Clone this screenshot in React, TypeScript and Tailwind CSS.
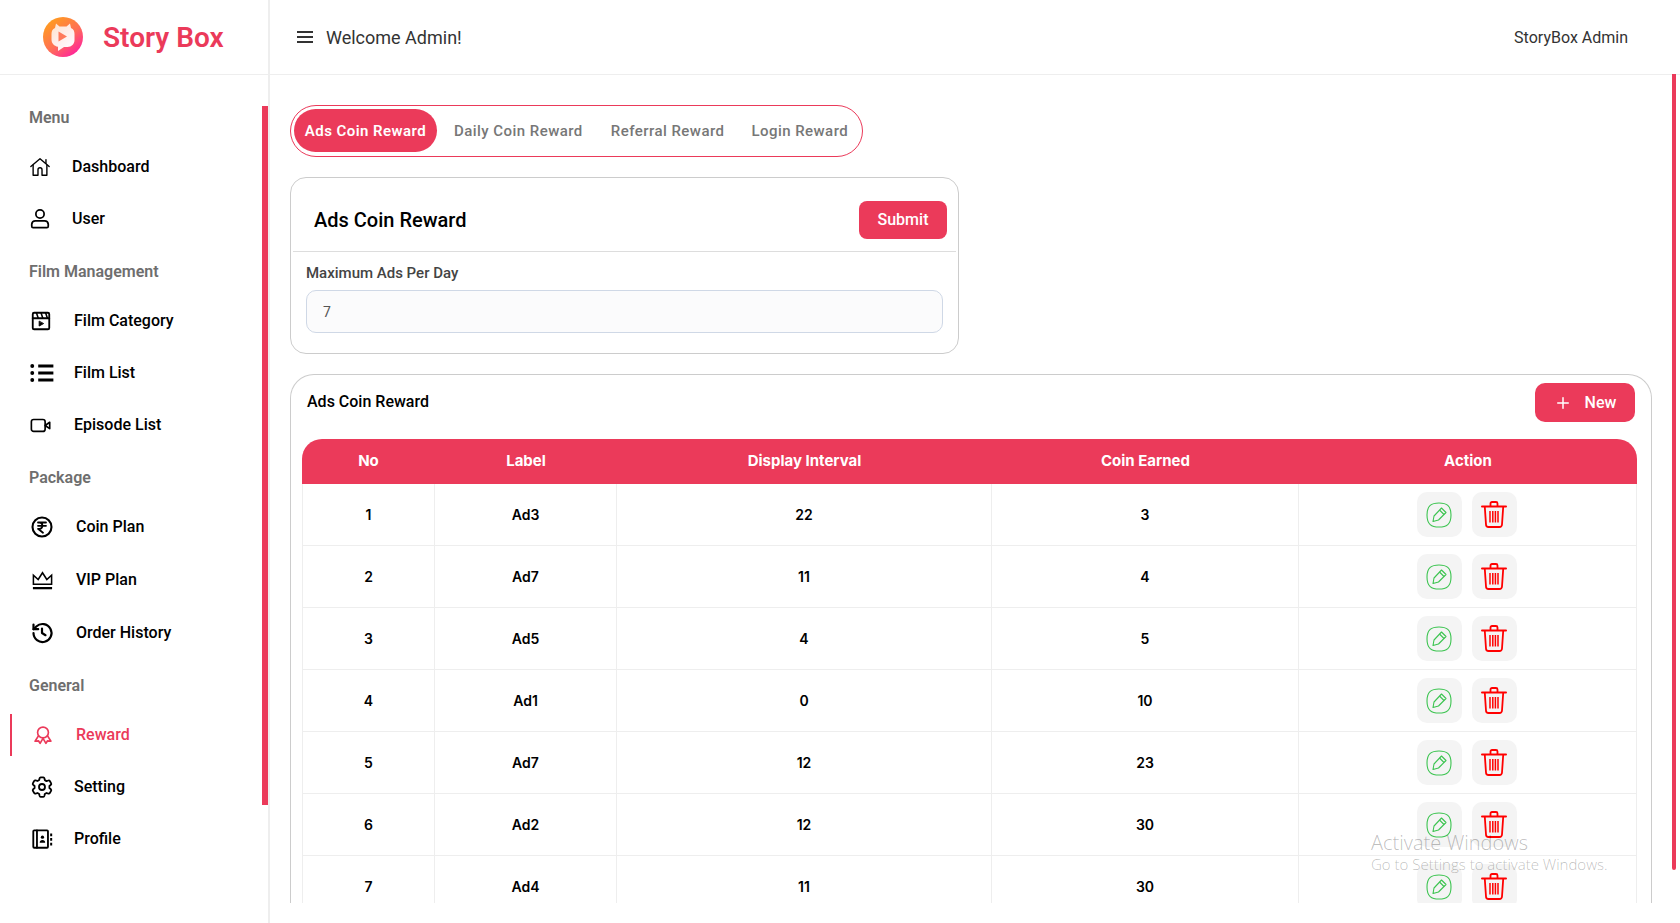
import React from "react";
import { Plus } from "lucide-react";

const S = ({ children, className = "w-5 h-5" }: { children: React.ReactNode; className?: string }) => (
  <svg viewBox="0 0 24 24" fill="none" stroke="currentColor" strokeWidth={2} strokeLinecap="round" strokeLinejoin="round" className={className}>
    {children}
  </svg>
);

const HomeI = () => (
  <S className="-ml-[1px] mr-[1px] w-[22px] h-[22px]">
    <path d="M2 11.500 12 3l10 8.500" strokeWidth={1.500} />
    <path d="M18.500 8V4" strokeWidth={1.500} />
    <path d="M4.500 10v11h5.300v-6a2.200 2.200 0 0 1 4.400 0v6h5.300V10" strokeWidth={1.500} />
  </S>
);
const UserI = () => (
  <S className="-ml-[1px] mr-[1px] w-[22px] h-[24px]">
    <circle cx="12" cy="6.500" r="4.500" strokeWidth={1.900} />
    <path d="M7 14h10a4 4 0 0 1 4 3.500V20a1.500 1.500 0 0 1-1.500 1.500h-15A1.500 1.500 0 0 1 3 20v-2.500A4 4 0 0 1 7 14Z" strokeWidth={1.900} />
  </S>
);
const FilmI = () => (
  <S className="w-[22px] h-[22px]">
    <rect x="3" y="3" width="18" height="18" rx="1.500" />
    <path d="M3 9h18" />
    <path d="m7 3 2 6m3-6 2 6m3-6 2 6" strokeWidth={1.700} />
    <path d="M10 12.500v5l4.500-2.500Z" fill="currentColor" strokeWidth={1} />
  </S>
);
const ListI = () => (
  <S className="-ml-[1px] -mr-[1px] w-[26px] h-[26px]">
    <path d="M8.500 5.500H22.500M8.500 12H22.500M8.500 18.500H22.500" strokeWidth={2.800} strokeLinecap="butt" />
    <circle cx="3" cy="5.500" r="1.800" fill="currentColor" stroke="none" />
    <circle cx="3" cy="12" r="1.800" fill="currentColor" stroke="none" />
    <circle cx="3" cy="18.500" r="1.800" fill="currentColor" stroke="none" />
  </S>
);
const VideoI = () => (
  <S className="w-[22px] h-[22px]">
    <rect x="1.500" y="6" width="15" height="13" rx="2.500" strokeWidth={1.800} />
    <path d="m16.500 12.500 5-3.500v7Z" strokeWidth={1.800} />
  </S>
);
const CoinI = () => (
  <S className="w-[24px] h-[24px]">
    <circle cx="12" cy="12" r="9.500" strokeWidth={2.100} />
    <path d="M8 7.500h8M8 10.800h8M9.500 7.500c3.800 0 3.800 6.300 0 6.300H8l5 4" strokeWidth={1.800} />
  </S>
);
const CrownI = () => (
  <S className="ml-[1px] -mr-[1px] w-[23px] h-[23px]">
    <path d="M2.500 17V7.500L7.500 12 12 5l4.500 7 5-4.500V17Z" strokeWidth={1.600} strokeLinecap="butt" strokeLinejoin="miter" />
    <path d="M2 21h20" strokeWidth={2.400} strokeLinecap="butt" />
  </S>
);
const HistoryI = () => (
  <S className="w-[24px] h-[24px]">
    <path d="M3.500 12A9 9 0 1 0 6.300 5.500L3.500 8.200" strokeWidth={2.200} />
    <path d="M3.500 3.500v4.700h4.700" strokeWidth={2.200} />
    <path d="M12 7.500V12l3.500 2.200" strokeWidth={2.200} />
  </S>
);
const AwardI = () => (
  <S className="w-[20px] h-[20px]">
    <circle cx="12" cy="9" r="6.500" />
    <path d="m6.500 13-4 6.500 4-.5 2 3 3.500-6 3.500 6 2-3 4 .5-4-6.500" />
  </S>
);
const GearI = () => (
  <S className="w-6 h-6">
    <path strokeWidth={1.800} d="M9.600 3.200a1.200 1.200 0 0 1 1.100-.9h2.600a1.200 1.200 0 0 1 1.100.9l.4 1.900 1.700 1 1.900-.6a1.200 1.200 0 0 1 1.400.5l1.300 2.300a1.200 1.200 0 0 1-.2 1.500L19.400 11v2l1.500 1.300a1.200 1.200 0 0 1 .2 1.500l-1.300 2.300a1.200 1.200 0 0 1-1.400.5l-1.900-.6-1.700 1-.4 1.900a1.200 1.200 0 0 1-1.100.9h-2.600a1.200 1.200 0 0 1-1.100-.9l-.4-1.900-1.700-1-1.900.6a1.200 1.200 0 0 1-1.400-.5l-1.300-2.300a1.200 1.200 0 0 1 .2-1.500L4.600 13v-2L3.100 9.700a1.200 1.200 0 0 1-.2-1.500l1.300-2.300a1.200 1.200 0 0 1 1.400-.5l1.900.6 1.700-1Z" />
    <circle cx="12" cy="12" r="3" strokeWidth={1.800} />
  </S>
);
const ProfileI = () => (
  <S className="ml-[1px] -mr-[1px] w-[22px] h-[22px]">
    <rect x="2.500" y="2.500" width="16" height="19" rx="1" />
    <path d="M6.500 2.500v19" />
    <circle cx="12.500" cy="10" r="1.800" fill="currentColor" stroke="none" />
    <path d="M9.500 16c0-2 1.200-3 3-3s3 1 3 3Z" fill="currentColor" stroke="none" />
    <path d="M22 6v3M22 11v3M22 16v3" strokeWidth={2.200} strokeLinecap="butt" />
  </S>
);

const EditI = () => (
  <svg viewBox="0 0 26 26" fill="none" stroke="#3cc450" strokeWidth={1.100} strokeLinejoin="round" className="h-[26px] w-[26px]">
    <path d="M13 1c7.500 0 12 2.500 12 12s-4.500 12-12 12S1 22.500 1 13 5.500 1 13 1Z" />
    <path d="m15.500 6 4.500 4.500-7.500 7.500-5.500 1.500 1-5.500Z" />
    <path d="m13.500 8 4.500 4.500" />
  </svg>
);
const TrashI = () => (
  <svg viewBox="0 0 26 28" fill="none" stroke="#ff0000" strokeWidth={1.800} strokeLinecap="round" strokeLinejoin="round" className="h-[29px] w-[26px]">
    <path d="M1 6h24" strokeWidth={2} />
    <path d="M9.500 5.500V3a1.500 1.500 0 0 1 1.500-1.500h4A1.500 1.500 0 0 1 16.500 3v2.500" />
    <path d="M3.800 6.500 5 24a2.500 2.500 0 0 0 2.500 2.500h11A2.500 2.500 0 0 0 21 24l1.200-17.500" />
    <path d="M9 10.500v11.500M11.800 10.500v11.500M14.400 10.500v11.500M17 10.500v11.500" strokeLinecap="butt" strokeWidth={1.500} />
  </svg>
);

const Logo = () => (
  <svg viewBox="0 0 40 40" className="h-10 w-10">
    <defs>
      <linearGradient id="lg" x1="0.15" y1="0.05" x2="0.85" y2="0.95">
        <stop offset="0" stopColor="#ff9f1c" />
        <stop offset="0.55" stopColor="#ff6f55" />
        <stop offset="1" stopColor="#ff1fa0" />
      </linearGradient>
      <linearGradient id="lw" x1="0" y1="0" x2="0.8" y2="1">
        <stop offset="0" stopColor="#ffffff" stopOpacity={0.75} />
        <stop offset="1" stopColor="#ffffff" stopOpacity={1} />
      </linearGradient>
    </defs>
    <circle cx="20" cy="20" r="20" fill="url(#lg)" />
    <path d="M13 6.500l3.500 3h7L27 6.500l1 4.500c2.500 1 3.500 3 3.500 6v6c0 4-3 7-7 7h-3.500L15 34v-4.200c-4-.8-6.500-3.500-6.500-7.300V17c0-3 1-5 3.500-6Z" fill="url(#lw)" />
    <path d="M15.500 14.500v10l8.500-5Z" fill="#ff7a5c" />
  </svg>
);

type Item = { label: string; icon: React.ReactNode; gap: string; h: string; active?: boolean };
const groups: { title: string; top: string; bottom: string; items: Item[] }[] = [
  {
    title: "Menu",
    top: "mt-[31px]",
    bottom: "mb-[11px]",
    items: [
      { label: "Dashboard", icon: <HomeI />, gap: "gap-[20px]", h: "h-[52px]" },
      { label: "User", icon: <UserI />, gap: "gap-[20px]", h: "h-[52px]" },
    ],
  },
  {
    title: "Film Management",
    top: "mt-[15px]",
    bottom: "mb-[11px]",
    items: [
      { label: "Film Category", icon: <FilmI />, gap: "gap-[22px]", h: "h-[52px]" },
      { label: "Film List", icon: <ListI />, gap: "gap-[20px]", h: "h-[52px]" },
      { label: "Episode List", icon: <VideoI />, gap: "gap-[22px]", h: "h-[52px]" },
    ],
  },
  {
    title: "Package",
    top: "mt-[15px]",
    bottom: "mb-[10px]",
    items: [
      { label: "Coin Plan", icon: <CoinI />, gap: "gap-[22px]", h: "h-[53px]" },
      { label: "VIP Plan", icon: <CrownI />, gap: "gap-[23px]", h: "h-[53px]" },
      { label: "Order History", icon: <HistoryI />, gap: "gap-[22px]", h: "h-[53px]" },
    ],
  },
  {
    title: "General",
    top: "mt-[15px]",
    bottom: "mb-[11px]",
    items: [
      { label: "Reward", icon: <AwardI />, gap: "gap-[23px]", h: "h-[52px]", active: true },
      { label: "Setting", icon: <GearI />, gap: "gap-[20px]", h: "h-[52px]" },
      { label: "Profile", icon: <ProfileI />, gap: "gap-[22px]", h: "h-[52px]" },
    ],
  },
];

const rows = [
  ["1", "Ad3", "22", "3"],
  ["2", "Ad7", "11", "4"],
  ["3", "Ad5", "4", "5"],
  ["4", "Ad1", "0", "10"],
  ["5", "Ad7", "12", "23"],
  ["6", "Ad2", "12", "30"],
  ["7", "Ad4", "11", "30"],
];

const Sidebar = () => (
  <aside className="relative h-[923px] w-[270px] shrink-0 border-r-2 border-[#eeeeee] bg-white">
    <div className="flex h-[75px] items-center border-b border-[#eeeeee] pl-[43px]">
      <Logo />
      <span className="ml-[20px] pt-[2px] text-[28px] font-semibold leading-none text-[#eb3a5a]">Story Box</span>
    </div>
    <nav className="pl-[10px]">
      {groups.map((g) => (
        <div key={g.title}>
          <div className={`${g.top} ${g.bottom} pl-[19px] text-base font-semibold leading-6 text-[#6e6e6e]`}>{g.title}</div>
          {g.items.map((it) => (
            <div key={it.label} className={`${it.h} flex items-center`}>
              <div
                className={`flex h-[42px] w-full items-center border-l-2 pl-[18px] ${it.gap} ${
                  it.active ? "border-[#eb3a5a] text-[#eb3a5a]" : "border-transparent text-black"
                }`}
              >
                <span className={it.active ? "ml-[3px] flex" : "flex"}>{it.icon}</span>
                <span className="text-base font-medium">{it.label}</span>
              </div>
            </div>
          ))}
        </div>
      ))}
    </nav>
    <div className="absolute right-0 top-[106px] h-[699px] w-[6px] bg-[#eb3a5a]" />
  </aside>
);

const Header = () => (
  <header className="flex h-[75px] items-center justify-between border-b border-[#eeeeee] pl-[26px] pr-[52px]">
    <div className="flex items-center gap-[12px]">
      <svg viewBox="0 0 18 14" className="h-[14px] w-[18px]" fill="none" stroke="#333" strokeWidth={2}>
        <path d="M1 2h16M1 7h16M1 12h16" />
      </svg>
      <span className="pt-[2px] text-lg text-[#333333]">Welcome Admin!</span>
    </div>
    <span className="pt-[2px] text-base text-[#333333]">StoryBox Admin</span>
  </header>
);

const Tabs = () => (
  <div className="flex h-[52px] w-fit items-center rounded-full border border-[#eb3a5a] pl-[3px] pr-[14px] text-[15px] font-medium tracking-[0.45px] text-[#777777]">
    <div className="-mt-[2px] flex h-[43px] w-[143px] items-center justify-center rounded-full bg-[#eb3a5a] pt-[3px] font-semibold text-white">Ads Coin Reward</div>
    <div className="ml-[17px] pt-[1px]">Daily Coin Reward</div>
    <div className="ml-[28px] pt-[1px]">Referral Reward</div>
    <div className="ml-[27px] pt-[1px]">Login Reward</div>
  </div>
);

const FormCard = () => (
  <section className="mt-[20px] h-[177px] w-[669px] rounded-2xl border border-[#cccccc] px-[2px]">
    <div className="flex items-center justify-between border-b border-[#dddddd] pb-[12px] pl-[21px] pr-[9px] pt-[23px]">
      <h2 className="text-xl font-medium text-black">Ads Coin Reward</h2>
      <button className="h-[38px] w-[88px] rounded-lg bg-[#eb3a5a] text-base font-medium text-white">Submit</button>
    </div>
    <div className="px-[13px]">
      <label className="mt-[10px] block text-[15px] font-medium leading-[22px] text-[#444444]">Maximum Ads Per Day</label>
      <div className="mt-[6px] flex h-[43px] items-center rounded-[10px] border border-[#cfd8e6] bg-[#fbfbfc] pl-[16px] text-sm text-[#555555]">7</div>
    </div>
  </section>
);

const thClass = "h-[45px] border-0 bg-[#eb3a5a] text-center text-[15px] font-bold text-white";
const tdClass = "h-[62px] border-b border-r border-[#eeeeee] text-center text-sm font-semibold text-black";

const TableCard = () => (
  <section className="mt-[20px] w-[1362px] rounded-t-[24px] border border-b-0 border-[#cccccc] pl-[11px] pr-[14px]">
    <div className="flex h-[64px] items-start justify-between pr-[2px] pt-[8px]">
      <h3 className="ml-[5px] pt-[7px] text-base font-medium leading-6 text-black">Ads Coin Reward</h3>
      <button className="flex h-[39px] w-[100px] items-center justify-center gap-[13px] rounded-[10px] bg-[#eb3a5a] text-base font-medium text-white">
        <Plus className="h-[18px] w-[18px]" strokeWidth={2} />
        New
      </button>
    </div>
    <table className="w-[1335px] table-fixed border-separate border-spacing-0 [font-family:Inter,sans-serif]">
      <colgroup>
        <col className="w-[133px]" />
        <col className="w-[182px]" />
        <col className="w-[375px]" />
        <col className="w-[307px]" />
        <col className="w-[338px]" />
      </colgroup>
      <thead>
        <tr>
          <th className={`${thClass} rounded-tl-[20px]`}>No</th>
          <th className={thClass}>Label</th>
          <th className={thClass}>Display Interval</th>
          <th className={thClass}>Coin Earned</th>
          <th className={`${thClass} rounded-tr-[20px]`}>Action</th>
        </tr>
      </thead>
      <tbody>
        {rows.map((r) => (
          <tr key={r[0]}>
            <td className={`${tdClass} border-l`}>{r[0]}</td>
            <td className={tdClass}>{r[1]}</td>
            <td className={tdClass}>{r[2]}</td>
            <td className={tdClass}>{r[3]}</td>
            <td className={tdClass}>
              <div className="flex items-center justify-center gap-[10px] pr-[2px]">
                <span className="flex h-[45px] w-[45px] items-center justify-center rounded-[10px] bg-[#f4f4f4]">
                  <EditI />
                </span>
                <span className="flex h-[45px] w-[45px] items-center justify-center rounded-[10px] bg-[#f4f4f4]">
                  <TrashI />
                </span>
              </div>
            </td>
          </tr>
        ))}
      </tbody>
    </table>
  </section>
);

export default function App() {
  return (
    <div className="relative flex h-[923px] w-full overflow-hidden bg-white [font-family:Roboto,sans-serif]">
      <Sidebar />
      <div className="relative min-w-0 flex-1">
        <Header />
        <main className="h-[828px] overflow-hidden pl-[20px] pt-[30px]">
          <Tabs />
          <FormCard />
          <TableCard />
        </main>
        <div className="absolute right-[4px] top-[74px] h-[796px] w-[4px] rounded-b-full bg-[#eb3a5a]" />
      </div>
      <div className="pointer-events-none absolute left-[1371px] top-[829px] text-[#00000045] [font-family:'Open_Sans',sans-serif]">
        <div className="text-[20px] font-light leading-[27px]">Activate Windows</div>
        <div className="-mt-[2px] text-[15px] font-light leading-[20px]">Go to Settings to activate Windows.</div>
      </div>
    </div>
  );
}
